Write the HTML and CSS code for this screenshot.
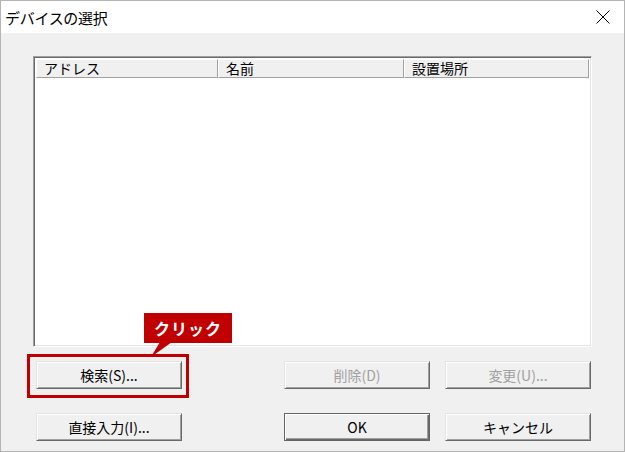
FILE: index.html
```html
<!DOCTYPE html>
<html lang="ja">
<head>
  <meta charset="UTF-8" />
  <title>デバイスの選択</title>
  <link rel="stylesheet" href="styles.css">
</head>
<body>

<div class="dialog">
  <div class="titlebar">
    <span class="title">デバイスの選択</span>
    <svg class="close" width="14" height="14" viewBox="0 0 14 14">
      <path d="M0.5 0.5 L13.5 13.5 M13.5 0.5 L0.5 13.5" stroke="#000" stroke-width="1" fill="none"/>
    </svg>
  </div>

  <div class="content">
    <div class="listbox">
      <div class="list-header">
        <div class="col col-addr">アドレス</div>
        <div class="col col-name">名前</div>
        <div class="col col-place">設置場所</div>
      </div>
      <div class="list-body"></div>
    </div>

    <div class="button-row row-first">
      <button class="btn">検索(S)...</button>
      <button class="btn disabled push">削除(D)</button>
      <button class="btn disabled">変更(U)...</button>
    </div>

    <div class="button-row row-second">
      <button class="btn">直接入力(I)...</button>
      <button class="btn default push">OK</button>
      <button class="btn">キャンセル</button>
    </div>
  </div>

  <!-- annotation -->
  <div class="highlight"></div>
  <div class="callout">クリック</div>
  <svg class="callout-tail" width="30" height="16" viewBox="0 0 30 16">
    <polygon points="10,0 22,0 1,15" fill="#c00000"/>
  </svg>
</div>

</body>
</html>
```

FILE: styles.css
```css
body {
  margin: 0;
  padding: 0;
  background: #ffffff;
  font-family: "Noto Sans CJK JP", "Noto Sans", sans-serif;
}

.dialog {
  position: relative;
  width: 625px;
  height: 452px;
  box-sizing: border-box;
  border: 1px solid #b4b4b4;
  background: #f0f0f0;
  display: flex;
  flex-direction: column;
}

.titlebar {
  height: 32px;
  background: #ffffff;
  display: flex;
  align-items: center;
  justify-content: space-between;
  padding: 0 14px 0 4px;
}

.title {
  font-size: 15px;
  color: #000;
  letter-spacing: -0.3px;
}

.close {
  display: block;
}

.content {
  padding: 23px 0 0 32px;
  display: flex;
  flex-direction: column;
}

.listbox {
  width: 559px;
  height: 291px;
  box-sizing: border-box;
  border: 1px solid;
  border-color: #a0a0a0 #ffffff #ffffff #a0a0a0;
  box-shadow: inset 1px 1px 0 #696969, inset -1px -1px 0 #e3e3e3;
  background: #ffffff;
  padding: 2px 2px 0 2px;
  display: flex;
  flex-direction: column;
}

.list-header {
  display: flex;
  height: 19px;
  font-size: 14px;
  color: #000;
}

.col {
  box-sizing: border-box;
  height: 19px;
  background: #f0f0f0;
  border: 1px solid;
  border-color: #ffffff #a0a0a0 #a0a0a0 #ffffff;
  padding-left: 7px;
  line-height: 16px;
  white-space: nowrap;
}

.col-addr { width: 182px; }
.col-name { width: 186px; }
.col-place { width: 185px; }

.list-body {
  flex: 1;
}

.button-row {
  display: flex;
  padding-left: 3px;
}

.row-first {
  margin-top: 14px;
}

.row-second {
  margin-top: 24px;
}

.btn {
  width: 146px;
  height: 28px;
  margin-right: 15px;
  box-sizing: border-box;
  border: 1px solid;
  border-color: #e3e3e3 #696969 #696969 #e3e3e3;
  box-shadow: inset 1px 1px 0 #ffffff, inset -1px -1px 0 #a0a0a0;
  background: #f0f0f0;
  font-family: "Noto Sans CJK JP", "Noto Sans", sans-serif;
  font-size: 14px;
  color: #000;
  padding: 0;
  cursor: pointer;
}

.btn.push {
  margin-left: 87px;
}

.btn.disabled {
  color: #a0a0a0;
  cursor: default;
}

.btn.default {
  border-color: #646464;
  box-shadow: inset 1px 1px 0 #ffffff, inset -1px -1px 0 #696969, inset -2px -2px 0 #a0a0a0;
}

.highlight {
  position: absolute;
  left: 26px;
  top: 353px;
  width: 162px;
  height: 44px;
  box-sizing: border-box;
  border: 3px solid #c00000;
}

.callout {
  position: absolute;
  left: 143px;
  top: 312px;
  width: 88px;
  height: 30px;
  background: #c00000;
  color: #ffffff;
  font-size: 16px;
  font-weight: bold;
  line-height: 30px;
  text-align: center;
  letter-spacing: 1px;
}

.callout-tail {
  position: absolute;
  left: 149px;
  top: 341px;
}
```
